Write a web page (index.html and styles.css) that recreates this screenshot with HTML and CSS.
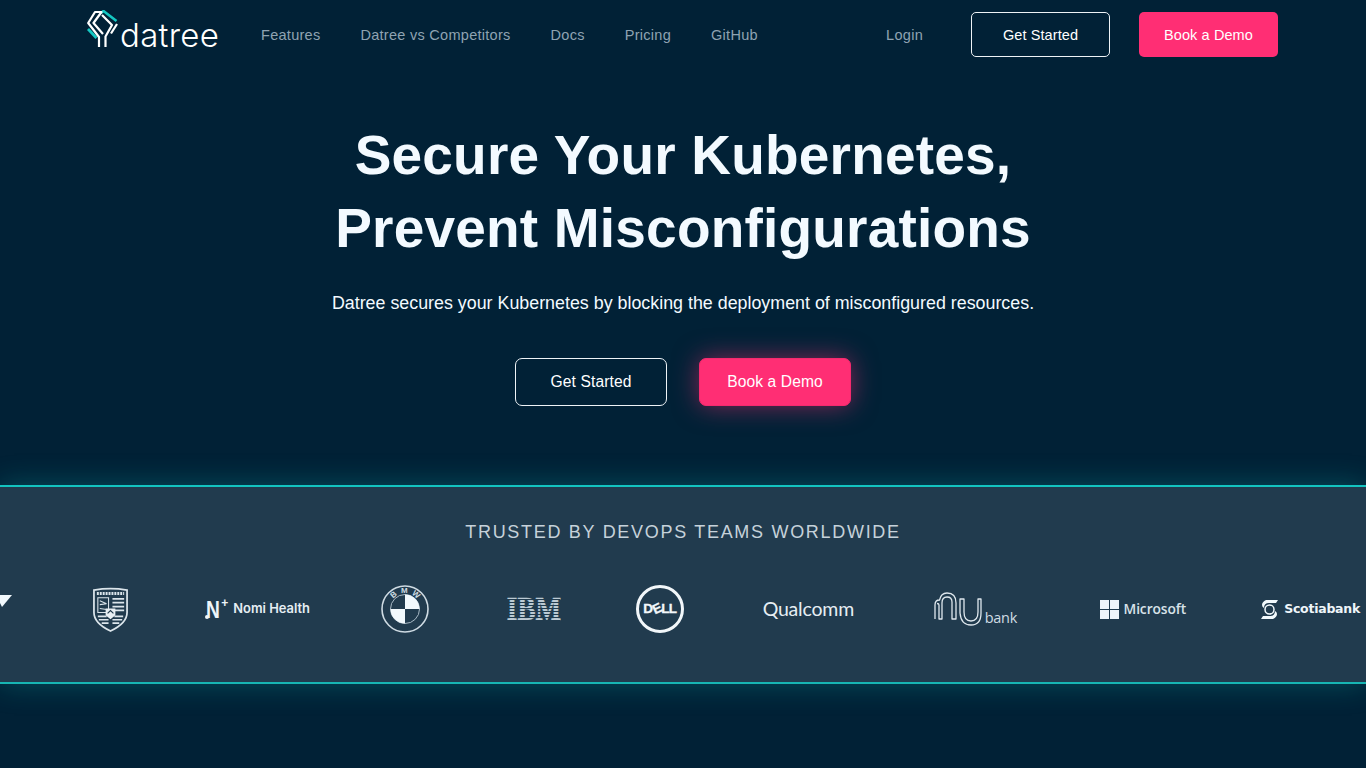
FILE: index.html
```html
<!DOCTYPE html>
<html lang="en">
<head>
<meta charset="utf-8">
<title>Datree</title>
<link rel="stylesheet" href="styles.css">
</head>
<body>
<header class="nav">
  <a class="brand" href="#">
    <svg class="brand-mark" width="31" height="37" viewBox="0 0 31 37" fill="none" stroke-width="2.200" stroke-linejoin="round">
      <path stroke="#15c7c2" stroke-width="2.800" d="M1 19l8.500 9"/>
      <path stroke="#15c7c2" stroke-width="2.600" d="M14 3l2.500-2L29.500 11"/>
      <path stroke="#fff" d="M12 37V27L1.200 13 8 2h6.500L6.500 13 16 24"/>
      <path stroke="#fff" d="M15 5l10 10-6.500 11.500V37"/>
      <path stroke="#fff" d="M30 14l-6 9.500"/>
    </svg>
    <span class="brand-name">datree</span>
  </a>
  <nav class="links">
    <a href="#">Features</a>
    <a href="#">Datree vs Competitors</a>
    <a href="#">Docs</a>
    <a href="#">Pricing</a>
    <a href="#">GitHub</a>
  </nav>
  <a class="login" href="#">Login</a>
  <a class="btn btn-ghost btn-nav" href="#">Get Started</a>
  <a class="btn btn-pink btn-nav" href="#">Book a Demo</a>
</header>

<main>
  <section class="hero">
    <h1>Secure Your Kubernetes,<br>Prevent Misconfigurations</h1>
    <p>Datree secures your Kubernetes by blocking the deployment of misconfigured resources.</p>
    <div class="cta">
      <a class="btn btn-ghost btn-hero" href="#">Get Started</a>
      <a class="btn btn-pink btn-hero btn-glow" href="#">Book a Demo</a>
    </div>
  </section>

  <section class="trusted">
    <h2>TRUSTED BY DEVOPS TEAMS WORLDWIDE</h2>
    <div class="track">
      <div class="logo w-first">
        <svg width="14" height="14" viewBox="0 0 14 14"><path fill="#f2f9fd" d="M0 1h13L3 13 0 7z"/></svg>
      </div>
      <div class="logo w-porsche">
        <svg width="37" height="45" viewBox="0 0 38 46" fill="none" stroke="#dbe5eb">
          <path stroke-width="1.800" d="M2 3q17-3 34 0v23q0 11-17 19Q2 37 2 26z"/>
          <path stroke-width="3" stroke-dasharray="2 1" d="M5 6.500h28"/>
          <path stroke-width="1.100" d="M6 11h11v15H6z"/>
          <path stroke-width="1.800" d="M21 12h12M21 16h12M21 20h12M21 24h12"/>
          <path stroke-width="1.100" d="M8 14l7 3M8 18l7-1M8 22l7 1"/>
          <path stroke-width="1.700" d="M6 30h9M7 33.500h10M10 37h7M23 30h9M21 33.500h10M21 37h7"/>
          <path fill="#e9f0f4" stroke="none" d="M14 22h10v7l-5 4-5-4z"/>
          <path stroke="#213b4e" stroke-width="1.200" d="M16 27l3-3 3 3"/>
        </svg>
      </div>
      <div class="logo w-nomi">
        <span class="nomi-mark"><span class="nomi-n">N</span><span class="nomi-plus">+</span><span class="nomi-dot"></span></span>
        <span class="nomi-text">Nomi Health</span>
      </div>
      <div class="logo w-bmw">
        <span class="bmw">
          <svg width="48" height="48" viewBox="0 0 48 48">
            <circle cx="24" cy="24" r="23" fill="none" stroke="#cfdbe3" stroke-width="1.600"/>
            <circle cx="24" cy="24" r="14.500" fill="none" stroke="#a9bac6" stroke-width="1"/>
            <path fill="#f2f9fd" d="M24 9.500A14.500 14.500 0 0 1 38.500 24H24zM24 24v14.500A14.500 14.500 0 0 1 9.500 24z"/>
          </svg>
          <span class="bmw-b">B</span><span class="bmw-m">M</span><span class="bmw-w">W</span>
        </span>
      </div>
      <div class="logo w-ibm"><span class="ibm">IBM</span></div>
      <div class="logo w-dell">
        <span class="dell"><span class="dell-text">D<span class="dell-e">E</span>LL</span></span>
      </div>
      <div class="logo w-qualcomm"><span class="qualcomm">Qualcomm</span></div>
      <div class="logo w-nubank">
        <svg width="48" height="34" viewBox="0 0 48 34" fill="none" stroke="#dfe8ee" stroke-width="1.300" stroke-linejoin="round">
          <path d="M1 27V13Q1 8 5.500 8 7 1 13 1q9 0 9 10v16h-4V10q0-5-5-5-5 0-5 6v16H5V13q0-1.500-2-1.500"/>
          <path d="M26 7h4v13q0 9 7 9t7-9V7h3v14q0 12-10 12t-11-12z"/>
        </svg>
        <span class="nu-text">bank</span>
      </div>
      <div class="logo w-ms">
        <span class="ms-grid"><i></i><i></i><i></i><i></i></span>
        <span class="ms-text">Microsoft</span>
      </div>
      <div class="logo w-scotia">
        <svg width="17" height="19" viewBox="0 0 17 19" fill="none">
          <circle cx="8.500" cy="9.500" r="4.500" stroke="#f2f9fd" stroke-width="1.500"/>
          <path fill="#f2f9fd" d="M5 0h12l-2 3H8Q3 3 3 8 1 7 1 5q0-3 4-5zM12 19H0l2-3h7q5 0 5-5 2 1 2 3 0 3-4 5z"/>
        </svg>
        <span class="scotia-text">Scotiabank</span>
      </div>
    </div>
  </section>
</main>
</body>
</html>
```
FILE: styles.css
```css
* { box-sizing: border-box; }
html, body { margin: 0; padding: 0; }
body {
  height: 768px;
  overflow: hidden;
  background: #012136;
  font-family: "Liberation Sans", Arial, sans-serif;
  color: #fff;
}
a { text-decoration: none; color: inherit; }

.nav {
  display: flex;
  align-items: center;
  height: 69px;
  padding: 0 88px 0 87px;
}
.brand { display: flex; align-items: flex-end; width: 131px; height: 37px; margin-top: -12px; gap: 2px; }
.brand-mark { flex: none; }
.brand-name {
  font-family: Inter, sans-serif;
  font-weight: 300;
  font-size: 33px;
  line-height: 30px;
  letter-spacing: .3px;
  color: #fff;
  margin-bottom: -3px;
}
.links { display: flex; gap: 40px; margin-left: 43px; }
.links a, .login { font-size: 14.500px; letter-spacing: .28px; color: #8fa3b2; }
.login { margin-left: auto; margin-right: 48px; }

.btn {
  display: flex;
  align-items: center;
  justify-content: center;
  font-size: 14.500px;
  letter-spacing: .1px;
  border-radius: 5px;
  color: #fff;
}
.btn-nav { width: 139px; height: 45px; }
.btn-nav + .btn-nav { margin-left: 29px; }
.btn-ghost { border: 1px solid #eef3f6; }
.btn-pink { background: #ff2e74; }
.btn-hero { width: 152px; height: 48px; font-size: 15.600px; border-radius: 7px; }
.btn-glow { box-shadow: 0 0 26px rgba(255, 46, 116, .5); border: 1px solid #f52a6e; }

.hero { display: flex; flex-direction: column; align-items: center; padding-top: 50px; }
.hero h1 {
  margin: 0;
  font-size: 55px;
  line-height: 73px;
  font-weight: 700;
  text-align: center;
  color: #f3faff;
  letter-spacing: .2px;
}
.hero p {
  margin: 26px 0 0;
  font-size: 17.850px;
  line-height: 24px;
  color: #f3faff;
}
.cta { display: flex; gap: 32px; margin-top: 43px; }

.trusted {
  margin-top: 79px;
  height: 199px;
  background: #213b4e;
  border-top: 2px solid #13c4c0;
  border-bottom: 2px solid #17b5b3;
  box-shadow: 0 0 28px rgba(19, 196, 192, .28);
  overflow: hidden;
}
.trusted h2 {
  margin: 33px 0 0;
  font-size: 18px;
  line-height: 24px;
  font-weight: 400;
  letter-spacing: 1.700px;
  text-align: center;
  color: #c6d2da;
}
.track { display: flex; gap: 70px; margin-top: 38px; margin-left: -60px; height: 54px; }
.logo { flex: none; display: flex; align-items: center; justify-content: flex-end; }
.w-first { width: 73px; margin-right: 8px; align-items: flex-start; padding-top: 12px; }
.w-porsche { width: 38px; }
.w-nomi { width: 111px; gap: 7px; }
.w-bmw { width: 49px; }
.w-ibm { width: 61px; }
.w-dell { width: 54px; }
.w-qualcomm { width: 100px; }
.w-nubank { width: 93px; gap: 3px; }
.w-ms { width: 99px; gap: 5px; }
.w-scotia { width: 104px; gap: 6px; }

.nomi-mark { position: relative; display: block; width: 21px; height: 20px; }
.nomi-n {
  position: absolute; left: 1px; top: 0;
  font: 700 24px/21px "Liberation Sans", sans-serif;
  color: #eef5f9;
  transform: scaleX(.8);
  transform-origin: left top;
}
.nomi-plus { position: absolute; right: -2px; top: -2px; font: 700 12px/12px "Liberation Sans", sans-serif; color: #eef5f9; }
.nomi-dot { position: absolute; left: 0; bottom: 0; width: 4px; height: 4px; border-radius: 50%; background: #eef5f9; }
.nomi-text { font: 600 12.900px/16px Inter, sans-serif; color: #e6eef3; letter-spacing: 0; }

.bmw { position: relative; display: block; width: 48px; height: 48px; }
.bmw svg { display: block; }
.bmw span { position: absolute; font: 700 8px/8px "Liberation Sans", sans-serif; color: #cfdbe3; }
.bmw-b { left: 9.500px; top: 6px; transform: rotate(-40deg); }
.bmw-m { left: 20px; top: 2px; }
.bmw-w { left: 31px; top: 6px; transform: rotate(40deg); }

.ibm {
  position: relative;
  display: block;
  flex: none;
  width: 65px;
  margin: 0 -6px;
  font: 700 33px/24px "Liberation Serif", serif;
  color: #bccad4;
  -webkit-text-stroke: .5px #bccad4;
  text-align: center;
  white-space: nowrap;
  transform: scaleX(.82);
}
.ibm::after {
  content: "";
  position: absolute;
  inset: 0;
  background: repeating-linear-gradient(to bottom, transparent 0 2px, #213b4e 2px 3px);
}

.dell {
  display: flex;
  align-items: center;
  justify-content: center;
  width: 48px;
  height: 48px;
  border: 3px solid #f2f7fa;
  border-radius: 50%;
}
.dell-text { font: 700 13.500px/14px "Liberation Sans", sans-serif; color: #f2f7fa; letter-spacing: -.5px; -webkit-text-stroke: .3px #f2f7fa; }
.dell-e { display: inline-block; transform: rotate(-25deg); }

.qualcomm { font: 400 19.500px/24px Lato, sans-serif; color: #e6eef3; letter-spacing: -.2px; }
.nu-text { font: 400 14.500px/20px "Open Sans", sans-serif; color: #cfdbe3; align-self: flex-end; margin-bottom: 8px; letter-spacing: -.3px; }

.ms-grid { display: grid; grid-template-columns: 9px 9px; grid-template-rows: 9px 9px; gap: 1px; }
.ms-grid i { display: block; background: #eef5fa; }
.ms-text { font: 600 13.800px/18px "Open Sans", sans-serif; color: #d8e2e9; letter-spacing: -.1px; }
.scotia-text { font: 700 12.500px/16px "DejaVu Sans", sans-serif; color: #eef5f9; letter-spacing: -.25px; }
```
